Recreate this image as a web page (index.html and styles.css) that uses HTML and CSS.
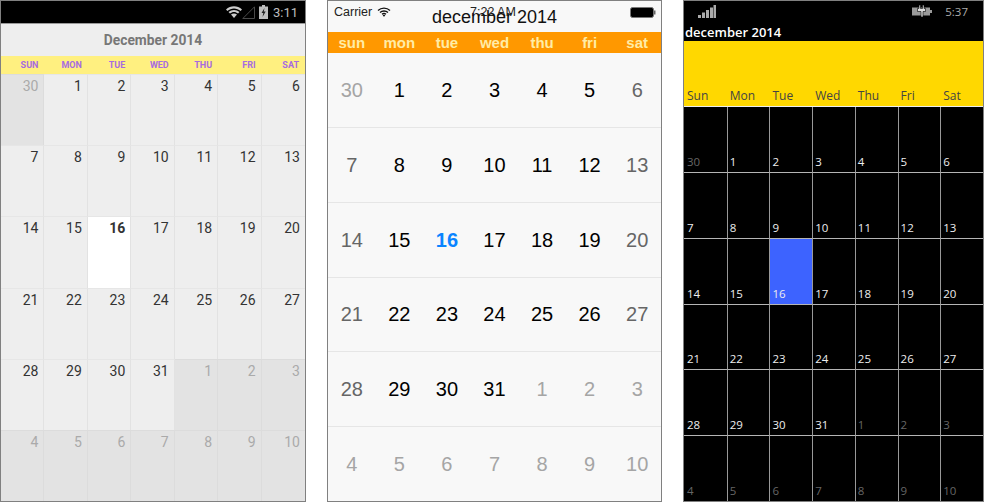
FILE: index.html
```html
<!DOCTYPE html>
<html lang="en">
<head>
<meta charset="utf-8">
<title>Calendars</title>
<link rel="stylesheet" href="styles.css">
</head>
<body>
<main class="screens">
  <section class="phone android">
    <div class="status">
      <svg class="a-wifi" width="16" height="12" viewBox="0 0 16 12"><path d="M0 3.500C4.500-.8 11.500-.8 16 3.500L14.600 5C10.800 1.500 5.200 1.500 1.400 5Z" fill="#ccc"/><path d="M2.500 6C5.500 3.200 10.500 3.200 13.500 6L12 7.500C9.700 5.400 6.300 5.400 4 7.500Z" fill="#ccc"/><path d="M5 8.500C6.800 7 9.200 7 11 8.500L8 12Z" fill="#ccc"/></svg>
      <svg class="a-signal" width="13" height="13" viewBox="0 0 13 13"><path d="M12.500.8V12.500H.8Z" fill="none" stroke="#4a4a4a"/></svg>
      <svg class="a-batt" width="9" height="14" viewBox="0 0 9 14"><path d="M3 0H6V1.500H9V14H0V1.500H3Z" fill="#bdbdbd"/><path d="M5.500 3L2.500 8H4.300L3.500 12L6.700 6.500H4.800Z" fill="#222"/></svg>
      <span class="a-time">3:11</span>
    </div>
    <h1 class="a-title">December 2014</h1>
    <div class="weekdays">
      <span>SUN</span><span>MON</span><span>TUE</span><span>WED</span><span>THU</span><span>FRI</span><span>SAT</span>
    </div>
    <div class="grid">
      <div class="off">30</div><div>1</div><div>2</div><div>3</div><div>4</div><div>5</div><div>6</div>
      <div>7</div><div>8</div><div>9</div><div>10</div><div>11</div><div>12</div><div>13</div>
      <div>14</div><div>15</div><div class="today">16</div><div>17</div><div>18</div><div>19</div><div>20</div>
      <div>21</div><div>22</div><div>23</div><div>24</div><div>25</div><div>26</div><div>27</div>
      <div>28</div><div>29</div><div>30</div><div>31</div><div class="off">1</div><div class="off">2</div><div class="off">3</div>
      <div class="off">4</div><div class="off">5</div><div class="off">6</div><div class="off">7</div><div class="off">8</div><div class="off">9</div><div class="off">10</div>
    </div>
  </section>

  <section class="phone ios">
    <div class="status">
      <span class="carrier">Carrier</span>
      <svg class="i-wifi" width="14" height="10" viewBox="0 0 13 10"><path d="M.5 3.500C3.800.3 9.200.3 12.500 3.500M2.500 5.500C4.700 3.500 8.300 3.500 10.500 5.500M4.500 7.300C5.700 6.300 7.300 6.300 8.500 7.300" fill="none" stroke="#111" stroke-width="1.300"/><path d="M6.500 9.800L5.200 8.500C6 7.900 7 7.900 7.800 8.500Z" fill="#111"/></svg>
      <span class="i-time">7:22 AM</span>
      <h1 class="i-title">december 2014</h1>
      <svg class="i-batt" width="26" height="11" viewBox="0 0 26 11"><rect x=".5" y=".5" width="23" height="10" rx="2" fill="#000" stroke="#777"/><rect x="24" y="3.500" width="1.500" height="4" fill="#666"/></svg>
    </div>
    <div class="weekdays">
      <span>sun</span><span>mon</span><span>tue</span><span>wed</span><span>thu</span><span>fri</span><span>sat</span>
    </div>
    <div class="grid">
      <div class="off">30</div><div>1</div><div>2</div><div>3</div><div>4</div><div>5</div><div class="end">6</div>
      <div class="end">7</div><div>8</div><div>9</div><div>10</div><div>11</div><div>12</div><div class="end">13</div>
      <div class="end">14</div><div>15</div><div class="today">16</div><div>17</div><div>18</div><div>19</div><div class="end">20</div>
      <div class="end">21</div><div>22</div><div>23</div><div>24</div><div>25</div><div>26</div><div class="end">27</div>
      <div class="end">28</div><div>29</div><div>30</div><div>31</div><div class="off">1</div><div class="off">2</div><div class="off">3</div>
      <div class="off">4</div><div class="off">5</div><div class="off">6</div><div class="off">7</div><div class="off">8</div><div class="off">9</div><div class="off">10</div>
    </div>
  </section>

  <section class="phone wp">
    <div class="status">
      <svg class="w-signal" width="18" height="13" viewBox="0 0 18 13"><path d="M0 10H3V13H0ZM4 7.500H7V13H4ZM8 5H11V13H8ZM12 2.500H15V13H12ZM15.500 0H18V13H15.500Z" fill="#aaa"/></svg>
      <svg class="w-batt" width="20" height="12" viewBox="0 0 20 12"><path d="M0 2.500H18V10.500H0Z" fill="#9a9a9a"/><path d="M18 5H20V8H18Z" fill="#9a9a9a"/><path d="M7 0H8.500V3.500H10.500V0H12V3.500H13.500V6.500H11V12H9V6.500H5.500V3.500H7Z" fill="#ddd" stroke="#000" stroke-width=".6"/></svg>
      <span class="w-time">5:37</span>
    </div>
    <h1 class="w-title">december 2014</h1>
    <div class="weekdays">
      <span>Sun</span><span>Mon</span><span>Tue</span><span>Wed</span><span>Thu</span><span>Fri</span><span>Sat</span>
    </div>
    <div class="grid">
      <div class="off">30</div><div>1</div><div>2</div><div>3</div><div>4</div><div>5</div><div>6</div>
      <div>7</div><div>8</div><div>9</div><div>10</div><div>11</div><div>12</div><div>13</div>
      <div>14</div><div>15</div><div class="today">16</div><div>17</div><div>18</div><div>19</div><div>20</div>
      <div>21</div><div>22</div><div>23</div><div>24</div><div>25</div><div>26</div><div>27</div>
      <div>28</div><div>29</div><div>30</div><div>31</div><div class="off">1</div><div class="off">2</div><div class="off">3</div>
      <div class="off">4</div><div class="off">5</div><div class="off">6</div><div class="off">7</div><div class="off">8</div><div class="off">9</div><div class="off">10</div>
    </div>
  </section>
</main>
</body>
</html>
```
FILE: styles.css
```css
* { box-sizing: border-box; margin: 0; padding: 0; }
html, body { width: 984px; height: 502px; overflow: hidden; background: #fff; }

.screens { display: flex; height: 502px; }
.phone { display: flex; flex-direction: column; height: 502px; border: 1px solid #808080; overflow: hidden; }
.weekdays { display: grid; grid-template-columns: repeat(7, 1fr); }
.grid { flex: 1; display: grid; grid-template-columns: repeat(7, 1fr); min-height: 0; }
h1 { font-weight: normal; }

/* Android */
.android { width: 306px; background: #eee; font-family: Roboto, sans-serif; }
.android .status { height: 22px; background: #000; display: flex; align-items: center; justify-content: flex-end; flex: none; }
.a-signal { margin-right: 4px; }
.a-batt { margin-right: 5px; }
.a-time { color: #bdbdbd; font-size: 13px; margin-right: 7px; }
.a-title { flex: none; height: 33px; border-top: 1px solid #999; display: flex; align-items: center; justify-content: center; font-size: 13.800px; font-weight: 700; color: #777; }
.android .weekdays { flex: none; height: 18px; background: #fff080; align-items: center; }
.android .weekdays span { text-align: right; padding-right: 6px; font-size: 9px; font-weight: 700; color: #a76be0; }
.android .grid { grid-template-rows: 71px 71px 72px 71px 71px 1fr; }
.android .grid div { padding: 3px 5px 0 0; text-align: right; font-size: 14px; line-height: 17px; color: #333; border-right: 1px solid #e2e2e2; border-top: 1px solid #e6e6e6; background: #eee; }
.android .grid div:nth-child(7n) { border-right: 0; }
.android .grid .off { background: #e3e3e3; color: #aaa; border-right-color: #dcdcdc; border-top-color: #dcdcdc; }
.android .grid .today { background: #fff; color: #333; font-weight: 700; }

/* iOS */
.ios { width: 335px; margin-left: 21px; background: #f8f8f8; font-family: "Liberation Sans", Arial, sans-serif; }
.ios .status { position: relative; height: 31px; flex: none; display: flex; align-items: flex-start; }
.carrier { font-size: 12.500px; line-height: 14px; margin: 4px 0 0 6px; color: #222; }
.i-wifi { margin: 6px 0 0 5px; }
.i-time { position: absolute; left: 142px; top: 4px; font-size: 12.500px; line-height: 14px; color: #222; }
.i-title { position: absolute; left: 0; right: 0; top: 6px; text-align: center; font-size: 18px; line-height: 20px; color: #111; }
.i-batt { position: absolute; right: 5px; top: 6px; }
.ios .weekdays { flex: none; height: 21px; background: #ff9800; align-items: center; }
.ios .weekdays span { text-align: center; font-size: 15px; font-weight: 700; color: #ffeca6; }
.ios .grid { grid-template-rows: 74px 75px 75px 74px 75px 1fr; }
.ios .grid div { display: flex; align-items: center; justify-content: center; font-size: 20px; color: #000; border-top: 1px solid #e6e6e6; }
.ios .grid div:nth-child(-n+7) { border-top: 1px solid transparent; }
.ios .grid .end { color: #666; }
.ios .grid .off { color: #a5a5a5; }
.ios .grid .today { color: #0a84ff; font-weight: 700; }

/* Windows Phone */
.wp { width: 301px; margin-left: 21px; background: #000; font-family: "Open Sans", "Noto Sans", sans-serif; }
.wp .status { flex: none; height: 17px; display: flex; align-items: center; padding-top: 3px; }
.w-signal { margin-left: 14px; }
.w-batt { margin-left: auto; margin-right: 13px; }
.w-time { font-size: 11.500px; color: #aaa; margin-right: 15px; }
.w-title { flex: none; height: 23px; font-size: 13px; font-weight: 600; color: #fff; line-height: 29px; padding-left: 1px; }
.wp .weekdays { flex: none; height: 66px; background: #ffd800; align-items: end; border-bottom: 1px solid #eee; }
.wp .weekdays span { font-size: 12px; line-height: 16px; color: #444; padding: 0 0 2px 3px; }
.wp .grid { grid-template-rows: 65px 66px 66px 65px 66px 1fr; }
.wp .grid div { display: flex; align-items: flex-end; padding: 0 0 2px 2px; font-size: 11.500px; line-height: 16px; color: #eee; border-left: 1px solid #999; border-top: 1px solid #b5b5b5; }
.wp .grid div:nth-child(7n+1) { border-left: 0; padding-left: 3px; }
.wp .grid div:nth-child(-n+7) { border-top: 0; }
.wp .grid .off { color: #666; }
.wp .grid .today { background: #3d63ff; color: #eee; }
```
